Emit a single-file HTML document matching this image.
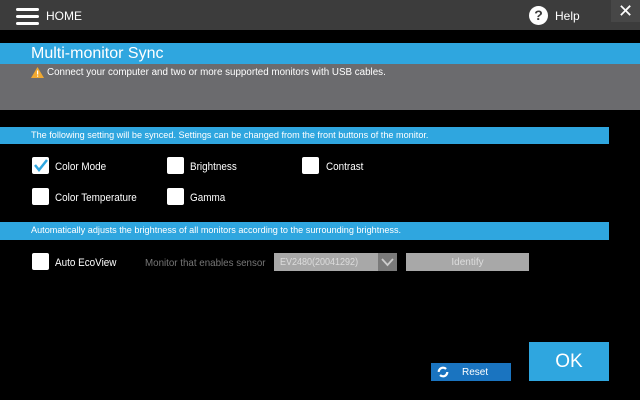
<!DOCTYPE html>
<html><head><meta charset="utf-8"><style>
*{margin:0;padding:0;box-sizing:border-box}
body{width:640px;height:400px;background:#000;position:relative;overflow:hidden;font-family:"Liberation Sans Narrow","Liberation Sans",sans-serif;color:#fff}
.a{position:absolute}
.cb{position:absolute;width:17px;height:17px;background:#fff;border-radius:2px}
.lbl{position:absolute;font-size:11px;line-height:17px;white-space:nowrap;transform:scaleX(.9);transform-origin:0 50%}
.bar{position:absolute;left:0;width:609px;background:#2fa6df;font-size:9.5px;padding-left:31px;white-space:nowrap}
.bar span{display:inline-block;transform:scaleX(.96);transform-origin:0 50%}
</style></head><body>
<div class="a" style="left:0;top:0;width:640px;height:30px;background:#3c3c3c"></div>
<div class="a" style="left:16px;top:8px;width:23px;height:3px;background:#fff;border-radius:2px"></div>
<div class="a" style="left:16px;top:15px;width:23px;height:3px;background:#fff;border-radius:2px"></div>
<div class="a" style="left:16px;top:22px;width:23px;height:3px;background:#fff;border-radius:2px"></div>
<div class="a" style="left:46px;top:9px;font-size:12px">HOME</div>
<div class="a" style="left:529px;top:6px;width:19px;height:19px;border-radius:50%;background:#fff;color:#3c3c3c;font-weight:bold;font-size:14px;text-align:center;line-height:19px">?</div>
<div class="a" style="left:555px;top:9px;font-size:12px">Help</div>
<div class="a" style="left:611px;top:0;width:29px;height:22px;background:#474747;font-size:18px;text-align:center;line-height:22px">✕</div>
<div class="a" style="left:0;top:43px;width:640px;height:21px;background:#2fa6df"></div>
<div class="a" style="left:31px;top:45px;font-size:16px">Multi-monitor Sync</div>
<div class="a" style="left:0;top:64px;width:640px;height:46px;background:#6b6b6e"></div>
<svg class="a" style="left:31px;top:67px" width="13" height="11"><polygon points="6.5,0 13,11 0,11" fill="#f0a830"/><rect x="6" y="3.5" width="1.2" height="4" fill="#fff"/><rect x="6" y="8.5" width="1.2" height="1.2" fill="#fff"/></svg>
<div class="a" style="left:47px;top:67px;font-size:10px;white-space:nowrap;transform:scaleX(.98);transform-origin:0 50%">Connect your computer and two or more supported monitors with USB cables.</div>
<div class="bar" style="top:127px;height:17px;line-height:17px"><span>The following setting will be synced. Settings can be changed from the front buttons of the monitor.</span></div>
<div class="cb" style="left:32px;top:157px"></div>
<svg class="a" style="left:32px;top:157px" width="17" height="17"><path d="M3 8 L7 13 L15 3" stroke="#2fa6df" stroke-width="2.5" fill="none"/></svg>
<div class="lbl" style="left:55px;top:159px">Color Mode</div>
<div class="cb" style="left:167px;top:157px"></div><div class="lbl" style="left:190px;top:159px">Brightness</div>
<div class="cb" style="left:302px;top:157px"></div><div class="lbl" style="left:326px;top:159px">Contrast</div>
<div class="cb" style="left:32px;top:188px"></div><div class="lbl" style="left:55px;top:190px">Color Temperature</div>
<div class="cb" style="left:167px;top:188px"></div><div class="lbl" style="left:190px;top:190px">Gamma</div>
<div class="bar" style="top:222px;height:18px;line-height:18px"><span>Automatically adjusts the brightness of all monitors according to the surrounding brightness.</span></div>
<div class="cb" style="left:32px;top:253px"></div><div class="lbl" style="left:55px;top:255px">Auto EcoView</div>
<div class="lbl" style="left:145px;top:255px;color:#777;font-size:10.5px;transform:scaleX(.93)">Monitor that enables sensor</div>
<div class="a" style="left:274px;top:253px;width:104px;height:18px;background:#a8a8a8"></div>
<div class="a" style="left:280px;top:255px;color:#ddd;font-size:10px;line-height:16px;white-space:nowrap;transform:scaleX(.9);transform-origin:0 50%">EV2480(20041292)</div>
<div class="a" style="left:378px;top:253px;width:19px;height:18px;background:#7a7a7a"></div>
<svg class="a" style="left:380px;top:256px" width="15" height="12"><path d="M2 3 L7.5 9 L13 3" stroke="#ccc" stroke-width="1.8" fill="none"/></svg>
<div class="a" style="left:406px;top:253px;width:123px;height:18px;background:#a8a8a8;color:#ddd;font-size:10px;line-height:20px;text-align:center">Identify</div>
<div class="a" style="left:431px;top:363px;width:80px;height:18px;background:#1a74c0;font-size:10px;line-height:20px;padding-left:31px">Reset</div>
<svg class="a" style="left:437px;top:366px" width="12" height="12"><circle cx="6" cy="6" r="4.3" stroke="#fff" stroke-width="2.2" fill="none" stroke-dasharray="10 3.5"/></svg>
<div class="a" style="left:529px;top:342px;width:80px;height:39px;background:#2fa6df;font-size:19px;line-height:40px;text-align:center">OK</div>
</body></html>
